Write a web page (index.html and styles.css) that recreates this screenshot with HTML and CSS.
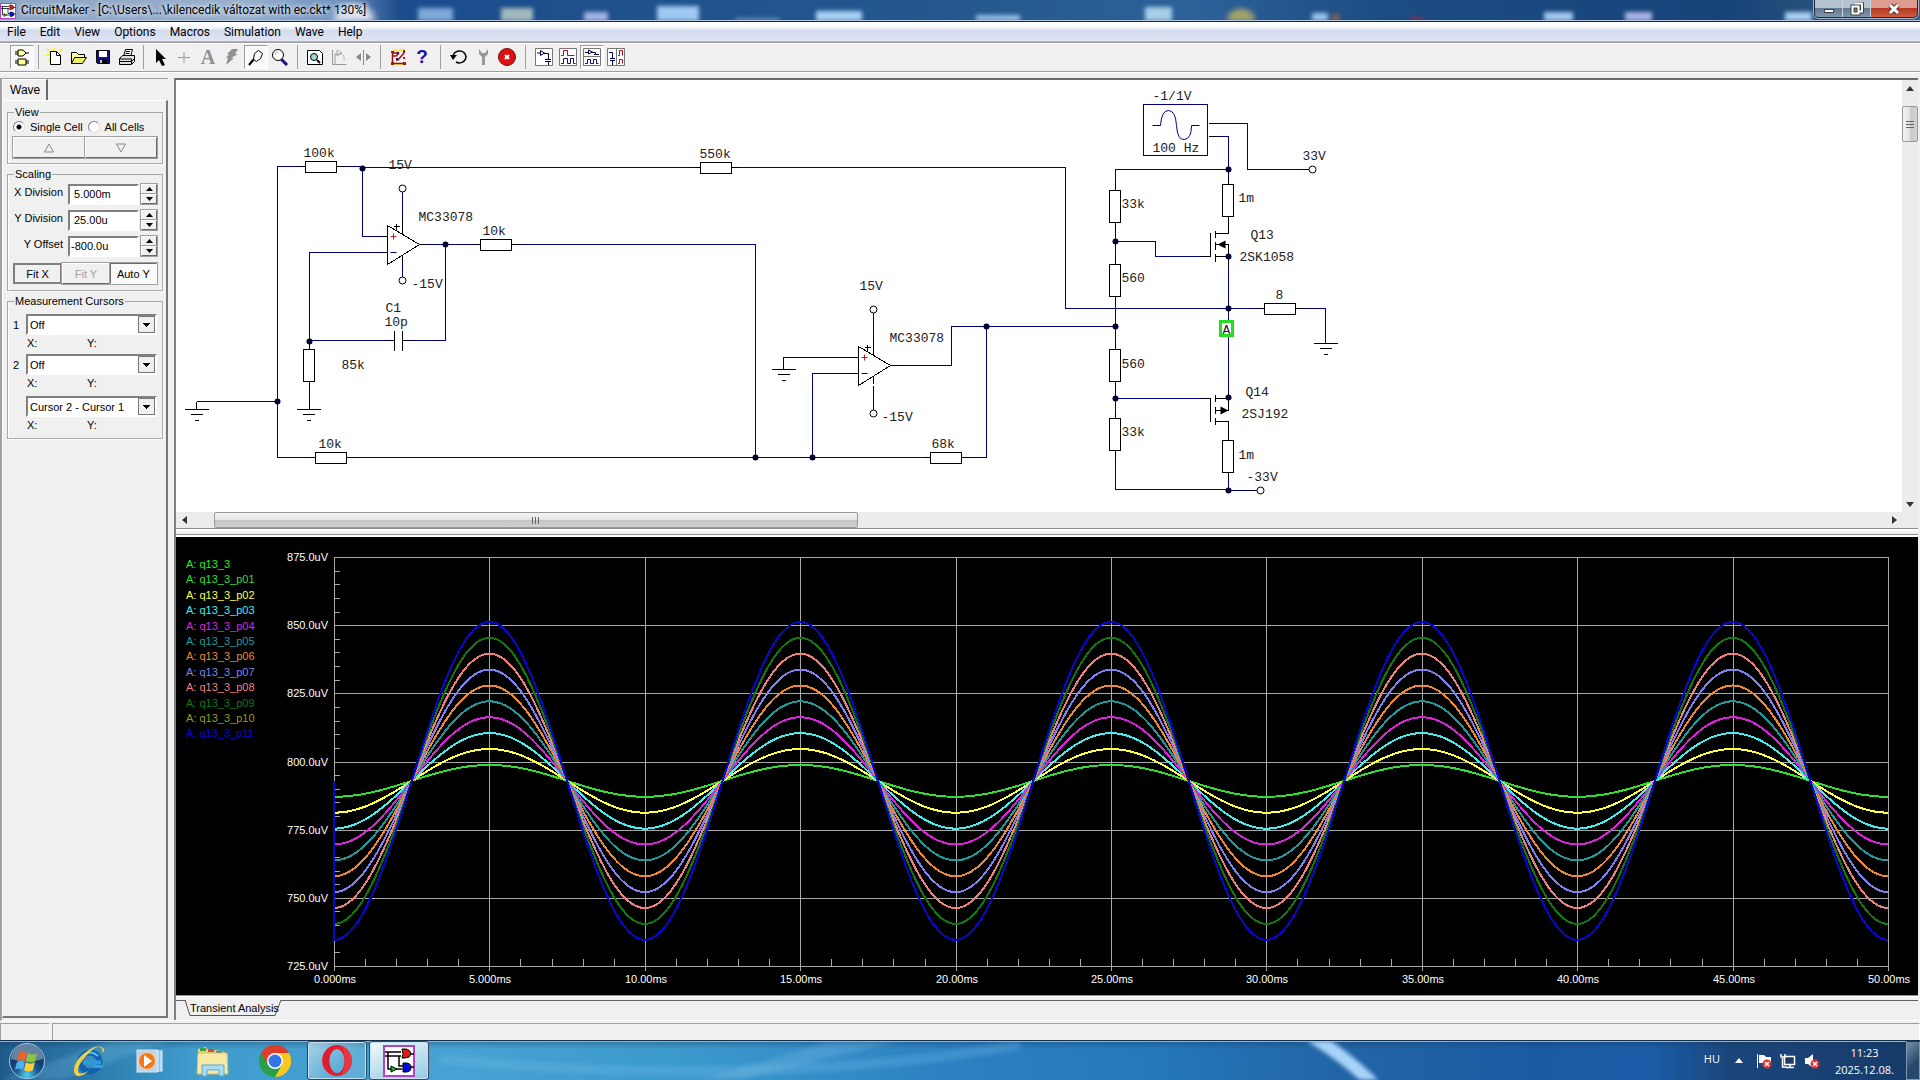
FILE: index.html
```html
<!DOCTYPE html>
<html lang="en">
<head>
  <meta charset="UTF-8" />
  <title>CircuitMaker</title>
  <link rel="stylesheet" href="styles.css">
</head>
<body>
  <header class="titlebar">
    <svg class="app-icon" width="16" height="16" viewBox="0 0 32 32"><use href="#cm-logo" /></svg>
    <span class="title-text">CircuitMaker - [C:\Users\...\kilencedik változat with ec.ckt* 130%]</span>
    <div class="window-buttons">
      <button aria-label="Minimize"><svg width="12" height="12"><rect x="1.500" y="6.500" width="9" height="3" fill="#fff" stroke="#444" /></svg></button>
      <button aria-label="Restore"><svg width="14" height="14"><path d="M5 1.500h7v8h-3M2.500 4.500h6v7h-6z" fill="none" stroke="#444" stroke-width="4" /><path d="M5 1.500h7v8h-3M2.500 4.500h6v7h-6z" fill="none" stroke="#fff" stroke-width="2" /></svg></button>
      <button class="close" aria-label="Close"><svg width="14" height="12"><path d="M3 2l8 8M11 2l-8 8" stroke="#533" stroke-width="5" /><path d="M3 2l8 8M11 2l-8 8" stroke="#fff" stroke-width="3" /></svg></button>
    </div>
  </header>

  <nav class="menubar">
    <button>File</button>
    <button>Edit</button>
    <button>View</button>
    <button>Options</button>
    <button>Macros</button>
    <button>Simulation</button>
    <button>Wave</button>
    <button>Help</button>
  </nav>

  <div class="toolbar">
    <button class="pressed" aria-label="Digital mode"><svg viewBox="0 0 20 20"><path d="M6 3h5l3 3-3 3H6zM6 12h8v6H6z" fill="#ffff99" stroke="#000" /><path d="M3 5h3M3 7h3M14 6h3M3 14h3M3 16h3M14 14h3M14 16h3" stroke="#000" /></svg></button>
    <span class="sep narrow"></span>
    <button aria-label="New"><svg viewBox="0 0 20 20"><path d="M2 2l4 4M10 1l-2 4M17 2l-3 3M1 8h4M3 14l3-3" stroke="#ffee33" stroke-width="2" /><path d="M5.500 4.500h6l4 4v9h-10z" fill="#fff" stroke="#000" /><path d="M11.500 4.500v4h4" fill="none" stroke="#000" /></svg></button>
    <button aria-label="Open"><svg viewBox="0 0 20 20"><path d="M2.500 16.500v-11h5l2 2h6v3" fill="#ffff99" stroke="#000" /><path d="M2.500 16.500l3-6h12l-4 6z" fill="#eeee66" stroke="#000" /></svg></button>
    <button aria-label="Save"><svg viewBox="0 0 20 20"><path d="M3.500 3.500h13v13h-12l-1-1z" fill="#111188" stroke="#000" /><path d="M6 4h8v6H6z" fill="#fff" /><path d="M6 12h8v4H6z" fill="#000" /><path d="M7 13h2v3H7z" fill="#ccc" /></svg></button>
    <button aria-label="Print"><svg viewBox="0 0 20 20"><path d="M6.500 9.500l2-7h7l-2 7z" fill="#fff" stroke="#000" /><path d="M9 4.500h4M8.500 6.500h4" stroke="#000" /><path d="M2.500 11.500l3-3h12v6l-3 3h-12z" fill="#ddd" stroke="#000" /><path d="M2.500 12h12v5M2.500 14.500h12l3-3" stroke="#000" fill="none" /></svg></button>
    <span class="sep narrow"></span>
    <button aria-label="Arrow"><svg viewBox="0 0 20 20"><path d="M6 2v14l3-3 3 6 3-1-3-6h4z" fill="#000" /></svg></button>
    <button aria-label="Wire"><svg viewBox="0 0 20 20"><path d="M10 5v11M4 10.500h12" stroke="#999" /></svg></button>
    <button class="letter" aria-label="Text">A</button>
    <button aria-label="Delete"><svg viewBox="0 0 20 20"><path d="M10 2h6l-3 5h3L9 11h3L4 18l2-7H4l3-4H5z" fill="#909090" /></svg></button>
    <button class="pressed" aria-label="Probe"><svg viewBox="0 0 20 20"><path d="M3 18l5-6" stroke="#000" stroke-width="2" /><path d="M7.500 12.500l1-6 4-3 4 3-2 5-4 3z" fill="#fff" stroke="#000" /></svg></button>
    <button aria-label="Zoom"><svg viewBox="0 0 20 20"><path d="M11 12l6 6" stroke="#111188" stroke-width="3" /><circle cx="8" cy="8" r="5.500" fill="#fff" stroke="#000" /><path d="M5 8q0-3 3-3" stroke="#aaa" fill="none" /></svg></button>
    <span class="sep"></span>
    <button aria-label="Fit"><svg viewBox="0 0 20 20"><path d="M2.500 3.500h12l3 3v11h-15z" fill="#fff" stroke="#000" /><circle cx="9" cy="10" r="3.500" fill="#9fd6d6" stroke="#000" /><path d="M12 13l3 3" stroke="#000" stroke-width="2" /></svg></button>
    <button aria-label="Rotate"><svg viewBox="0 0 20 20"><path d="M3.500 3v14.500h14M6 17V7h5" fill="none" stroke="#999" /><path d="M11 6q5 2 4 8M8 3l5 3-5 3z" fill="none" stroke="#999" stroke-dasharray="2 1" /></svg></button>
    <button aria-label="Mirror"><svg viewBox="0 0 20 20"><path d="M10.500 3v15" stroke="#888" /><path d="M8 6v8l-5-4zM13 6v8l5-4z" fill="#888" /></svg></button>
    <span class="sep"></span>
    <button aria-label="Check wiring"><svg viewBox="0 0 20 20"><path d="M5 2h11v3H5zM5 16h11v2H5z" fill="#ffe65a" /><path d="M4.500 4v13M4 16.500h12M5 9h3l3-3M8 13h2l6-7M5 6h5" stroke="#911" fill="none" stroke-width="1.500" /><path d="M15 3h2v3h-2zM15 10h2v2h-2zM15 15h3v3h-3zM3 15h3v3H3zM3 4h3v2H3z" fill="#a11" /><path d="M9 5h2v2H9zM8 11h2v2H8z" fill="#119" /></svg></button>
    <button class="help" aria-label="Help">?</button>
    <span class="sep wide"></span>
    <button aria-label="Reset"><svg viewBox="0 0 20 20"><path d="M4 9a6.500 6 0 1 1 3 6" fill="none" stroke="#000" stroke-width="1.500" /><path d="M1 8h7l-4 5z" fill="#000" /></svg></button>
    <button aria-label="Setup"><svg viewBox="0 0 20 20"><path d="M6 2v5l3 3v8h3v-8l3-3V2l-3 4H9z" fill="#999" /></svg></button>
    <button aria-label="Stop"><svg viewBox="0 0 20 20"><circle cx="10" cy="10" r="8.500" fill="#dd1111" stroke="#801010" /><path d="M8 8l4 4M12 8l-4 4" stroke="#fff" stroke-width="2" /></svg></button>
    <span class="sep wide"></span>
    <button aria-label="Schematic view"><svg viewBox="0 0 20 20"><path d="M1.500 1.500h17v17h-17z" fill="#fff" stroke="#777" /><path d="M3 6h3M6.500 3.500v5l4-2.500zM10 6.500h4.500v6M11 12.500h6M11 14.500h6M14.500 15v3" fill="none" stroke="#000044" /></svg></button>
    <button aria-label="Waveform view"><svg viewBox="0 0 20 20"><path d="M1.500 1.500h17v17h-17z" fill="#fff" stroke="#777" /><path d="M3 8.500h2.500V3.500h4v5h7" fill="none" stroke="#b01020" /><path d="M3 16.500h2.500v-5h4v5h3v-5h3v5h2" fill="none" stroke="#101070" /></svg></button>
    <button class="pressed" aria-label="Split horizontally"><svg viewBox="0 0 20 20"><path d="M1.500 1.500h17v17h-17zM2 9.500h16" fill="#fff" stroke="#777" /><path d="M3 5.500h3M6.500 3v4l4-2zM10 5.500h3.500v2M12 7.500h5" fill="none" stroke="#000044" /><path d="M3 16.500h2.500v-4h3v4h3v-4h3v4h2" fill="none" stroke="#101070" /></svg></button>
    <button aria-label="Split vertically"><svg viewBox="0 0 20 20"><path d="M1.500 1.500h17v17h-17zM10.500 2v16" fill="#fff" stroke="#777" /><path d="M3 5.500h3.500v6M4 11.500h5M4 13.500h5M6.500 14v4" fill="none" stroke="#000044" /><path d="M12 8.500h1.500V3.500h3v5M12 16.500h1.500v-4h3v4" fill="none" stroke="#b01020" /></svg></button>
  </div>

  <main class="workspace">
    <aside class="sidebar">
      <button class="tab">Wave</button>
      <div class="panel">
        <fieldset class="view-group">
          <legend>View</legend>
          <div class="radios">
            <label><input type="radio" name="cell" checked>Single Cell</label>
            <label><input type="radio" name="cell">All Cells</label>
          </div>
          <div class="buttons">
            <button aria-label="Previous cell"><svg width="12" height="10"><path d="M1.500 9h9L6 1z" fill="none" stroke="#888" /></svg></button>
            <button aria-label="Next cell"><svg width="12" height="10"><path d="M1.500 1h9L6 9z" fill="none" stroke="#888" /></svg></button>
          </div>
        </fieldset>

        <fieldset class="scaling-group">
          <legend>Scaling</legend>
          <div class="field">
            <label for="xdiv">X Division</label>
            <input type="text" id="xdiv" value="5.000m">
            <div class="spin">
              <button aria-label="Increase X"><svg width="7" height="4"><path d="M0 4h7L3.500 0z" /></svg></button>
              <button aria-label="Decrease X"><svg width="7" height="4"><path d="M0 0h7L3.500 4z" /></svg></button>
            </div>
          </div>
          <div class="field">
            <label for="ydiv">Y Division</label>
            <input type="text" id="ydiv" value="25.00u">
            <div class="spin">
              <button aria-label="Increase Y"><svg width="7" height="4"><path d="M0 4h7L3.500 0z" /></svg></button>
              <button aria-label="Decrease Y"><svg width="7" height="4"><path d="M0 0h7L3.500 4z" /></svg></button>
            </div>
          </div>
          <div class="field">
            <label for="yoff">Y Offset</label>
            <input type="text" id="yoff" class="tight" value="-800.0u">
            <div class="spin">
              <button aria-label="Increase offset"><svg width="7" height="4"><path d="M0 4h7L3.500 0z" /></svg></button>
              <button aria-label="Decrease offset"><svg width="7" height="4"><path d="M0 0h7L3.500 4z" /></svg></button>
            </div>
          </div>
          <div class="buttons fit">
            <button class="default">Fit X</button>
            <button disabled>Fit Y</button>
            <button class="down">Auto Y</button>
          </div>
        </fieldset>

        <fieldset class="cursor-group">
          <legend>Measurement Cursors</legend>
          <div class="cursor"><label for="c1">1</label><select id="c1"><option>Off</option></select></div>
          <div class="xy"><span>X:</span><span>Y:</span></div>
          <div class="cursor"><label for="c2">2</label><select id="c2"><option>Off</option></select></div>
          <div class="xy"><span>X:</span><span>Y:</span></div>
          <div class="cursor difference"><span></span><select id="cdiff" aria-label="Cursor difference"><option>Cursor 2 - Cursor 1</option></select></div>
          <div class="xy"><span>X:</span><span>Y:</span></div>
        </fieldset>
      </div>
    </aside>

    <section class="content">
      <div class="schematic-row">
        <div class="schematic">
          <svg width="1726" height="432" viewBox="175.500 79.500 1726 432">
            <defs>
              <g id="cm-logo">
                <rect x="1" y="1" width="30" height="30" fill="#fff" stroke="#b044c8" stroke-width="2" />
                <path d="M2 7h16M2 11h16M5 7v17h3M16 11v10h4M27 9h4M13 24h6M28 22h3" fill="none" stroke="#000" stroke-width="1.500" />
                <path d="M19 4h3q5 0 6 5q-1 4-6 4h-3q2-4 0-9z" fill="#e01818" stroke="#000" />
                <path d="M20 18h3q5 0 5 4.500t-5 4.500h-3z" fill="#0808d8" stroke="#000" />
                <path d="M8 21v6l6-3z" fill="#22b822" stroke="#000" />
              </g>
              <g id="res-h"><path class="lead" d="M-7 5H39" /><rect width="31" height="11" class="part" /></g>
              <g id="res-v"><path class="lead" d="M6-7V39" /><rect width="11" height="32" class="part" /></g>
              <g id="gnd"><path class="lead" d="M-12 0H12M-6 5H6M-2 11H2" /></g>
              <g id="opamp">
                <path class="body" d="M0 0V39L32 19z" />
                <path class="lead" d="M-7 11H0M-7 27H0M32 19H39M15-10V9M15 29V37" />
                <path class="lead" d="M6 1H12M9-2V4" />
                <path d="M3 11H9M6 8V14" stroke="#c02020" />
                <path d="M3 27H9" stroke="#000080" />
              </g>
              <circle id="dot" r="3" />
            </defs>

            <!-- wires -->
            <g class="wire">
              <path d="M300 166H277V457H318M343 166H362M362 167H702M730 167H1065V308H1258M1302 308H1325V343" />
              <path d="M362 167V236H382M387 252H309V340H394M402 340H445V244M419 244H474M518 244H755V457" />
              <path d="M196 401H277M309 340V409M340 457H924M962 457H986V326M889 365H951V326H1115" />
              <path d="M402 191V236M402 262V280M873 312V356M873 385V413" />
              <path d="M851 357H783V363M857 373H812V457" />
              <path d="M1208 123H1247V169H1302M1208 136H1228V490H1250M1228 169H1115V489H1228" />
              <path d="M1115 241H1155V256H1200M1115 398H1200" />
            </g>

            <!-- resistors -->
            <use href="#res-h" x="305" y="161" />
            <use href="#res-h" x="700" y="162" />
            <use href="#res-h" x="480" y="239" />
            <use href="#res-h" x="315" y="452" />
            <use href="#res-h" x="930" y="452" />
            <use href="#res-h" x="1264" y="303" />
            <use href="#res-v" x="303" y="349" />
            <use href="#res-v" x="1109" y="190" />
            <use href="#res-v" x="1109" y="264" />
            <use href="#res-v" x="1109" y="349" />
            <use href="#res-v" x="1109" y="418" />
            <use href="#res-v" x="1222" y="184" />
            <use href="#res-v" x="1222" y="440" />

            <!-- capacitor -->
            <rect x="395" y="332" width="7" height="16" fill="#fff" />
            <path class="lead" d="M394 330V350M402 330V350M387 340H394M402 340H410" />

            <!-- grounds -->
            <use href="#gnd" x="196" y="409" />
            <use href="#gnd" x="308" y="409" />
            <use href="#gnd" x="783" y="369" />
            <use href="#gnd" x="1325" y="343" />
            <path class="lead" d="M196 401V409M309 400V409M783 362V369" />

            <!-- op amps and supply terminals -->
            <use href="#opamp" x="387" y="225" />
            <use href="#opamp" x="858" y="346" />
            <g class="terminal">
              <circle cx="402" cy="188" r="3.500" />
              <circle cx="402" cy="280" r="3.500" />
              <circle cx="873" cy="309" r="3.500" />
              <circle cx="873" cy="413" r="3.500" />
              <circle cx="1312" cy="169" r="3.500" />
              <circle cx="1260" cy="490" r="3.500" />
            </g>
            <path class="lead" d="M1302 169H1308M1250 490H1256" />

            <!-- generator -->
            <rect x="1143" y="104" width="64" height="51" fill="#fff" stroke="#000080" />
            <path d="M1152 125H1160Q1161 110 1168 110T1176 125T1184 139T1191 125H1199" fill="none" stroke="#000080" />
            <path class="lead" d="M1208 123H1216M1208 136H1216" />

            <!-- transistors -->
            <path class="blank" d="M1228 233V244M1228 410V421" />
            <path class="lead" d="M1200 256H1210V232M1215 230V237M1215 241V249M1215 253V261M1215 233H1228V223M1215 244H1228V264M1215 256H1228" />
            <path d="M1217 244l8-4v8z" />
            <path class="lead" d="M1200 398H1210V421M1215 394V401M1215 406V413M1215 417V424M1215 398H1228M1215 410H1228V390M1215 421H1228V433" />
            <path d="M1228 410l-8-4v8z" />

            <!-- junctions -->
            <g class="junction">
              <use href="#dot" x="362" y="168" />
              <use href="#dot" x="445" y="244" />
              <use href="#dot" x="309" y="341" />
              <use href="#dot" x="277" y="401" />
              <use href="#dot" x="755" y="457" />
              <use href="#dot" x="812" y="457" />
              <use href="#dot" x="986" y="326" />
              <use href="#dot" x="1115" y="326" />
              <use href="#dot" x="1115" y="241" />
              <use href="#dot" x="1115" y="398" />
              <use href="#dot" x="1228" y="169" />
              <use href="#dot" x="1228" y="256" />
              <use href="#dot" x="1228" y="308" />
              <use href="#dot" x="1228" y="397" />
              <use href="#dot" x="1228" y="490" />
            </g>

            <!-- probe -->
            <rect x="1220" y="321" width="12" height="14" fill="#fff" stroke="#22dd22" stroke-width="3" />

            <g class="labels">
              <text x="303" y="156">100k</text>
              <text x="388" y="168">15V</text>
              <text x="418" y="220">MC33078</text>
              <text x="482" y="234">10k</text>
              <text x="699" y="157">550k</text>
              <text x="411" y="287">-15V</text>
              <text x="385" y="311">C1</text>
              <text x="384" y="325">10p</text>
              <text x="341" y="368">85k</text>
              <text x="318" y="447">10k</text>
              <text x="859" y="289">15V</text>
              <text x="889" y="341">MC33078</text>
              <text x="881" y="420">-15V</text>
              <text x="931" y="447">68k</text>
              <text x="1152" y="99">-1/1V</text>
              <text x="1152" y="151">100 Hz</text>
              <text x="1302" y="159">33V</text>
              <text x="1121" y="207">33k</text>
              <text x="1121" y="281">560</text>
              <text x="1121" y="367">560</text>
              <text x="1121" y="435">33k</text>
              <text x="1238" y="201">1m</text>
              <text x="1238" y="458">1m</text>
              <text x="1250" y="238">Q13</text>
              <text x="1239" y="260">2SK1058</text>
              <text x="1245" y="395">Q14</text>
              <text x="1241" y="417">2SJ192</text>
              <text x="1275" y="298">8</text>
              <text x="1246" y="480">-33V</text>
              <text x="1222" y="333">A</text>
            </g>
          </svg>
        </div>
        <div class="scroll vertical">
          <button aria-label="Scroll up"><svg width="8" height="5"><path d="M4 0l4 5H0z" /></svg></button>
          <div class="thumb"></div>
          <button aria-label="Scroll down"><svg width="8" height="5"><path d="M0 0h8L4 5z" /></svg></button>
        </div>
      </div>
      <div class="scroll horizontal">
        <button aria-label="Scroll left"><svg width="5" height="8"><path d="M5 0v8L0 4z" /></svg></button>
        <div class="thumb"></div>
        <button aria-label="Scroll right"><svg width="5" height="8"><path d="M0 0v8l5-4z" /></svg></button>
      </div>
      <div class="splitter"></div>
      <div class="chart" id="chart"></div>
      <div class="sheet-tabs">
        <button class="sheet">
          <svg width="98" height="17"><path d="M0 0H1L6 15.500H91L97 0" fill="#f0f0f0" stroke="#555" /></svg>
          <span>Transient Analysis</span>
        </button>
      </div>
    </section>
  </main>

  <footer class="status"><span></span><span></span></footer>

  <nav class="taskbar">
    <svg class="streaks" preserveAspectRatio="none" viewBox="0 0 1920 39">
      <path d="M0 39L110 0h60L60 39z" fill="#7cc2e6" opacity=".25" />
      <path d="M700 39L830 0h70L740 39z" fill="#9fd4f4" opacity=".2" />
      <path d="M440 18Q760 48 1020 4" fill="none" stroke="#7cc4ee" stroke-width="10" opacity=".25" />
      <path d="M1306 -8Q1348 16 1380 50" fill="none" stroke="#a9d4fa" stroke-width="13" />
    </svg>
    <button class="start" aria-label="Start">
      <svg width="38" height="38" viewBox="0 0 38 38">
        <defs><radialGradient id="orb" cy=".9"><stop offset="0" stop-color="#4fd0f0" /><stop offset=".6" stop-color="#1c5f96" /><stop offset="1" stop-color="#123f70" /></radialGradient></defs>
        <circle cx="19" cy="19" r="17.500" fill="url(#orb)" stroke="#a8c8dc" />
        <path d="M3 17a16 15 0 0 1 32 0q-16 5-32 0z" fill="#fff" opacity=".35" />
        <path d="M11 11q4-3 8 0l-2 8q-4-3-8 0z" fill="#f0602a" />
        <path d="M20 11q5 3 9 0l-2 8q-4 3-9 0z" fill="#8cc63c" />
        <path d="M9 20q4-3 8 0l-2 8q-4-3-8 0z" fill="#4cb0ea" />
        <path d="M18 20q4 3 9 0l-2 8q-4 3-9 0z" fill="#fccc3a" />
      </svg>
    </button>
    <button class="task" aria-label="Internet Explorer">
      <svg width="32" height="32" viewBox="0 0 32 32">
        <circle cx="17" cy="17" r="9.500" fill="none" stroke="#0e62ae" stroke-width="6" />
        <path d="M20 20h10v3H20z" fill="#3f9ccc" />
        <path d="M28 17.500H10" stroke="#2c9ce0" stroke-width="4" />
        <path d="M9 11q8-7 16 0" fill="none" stroke="#58c0f0" stroke-width="2" />
        <path d="M31 4Q25-2 13 7T1 25Q1 32 7 31Q13 29 15 26Q6 31 5 26T14 10T28 3Q30 4 29 8Q32 6 31 4z" fill="#f0cf40" />
      </svg>
    </button>
    <button class="task" aria-label="Media Player">
      <svg width="32" height="32" viewBox="0 0 32 32">
        <rect x="12" y="5" width="16" height="22" fill="#8fc4e6" /><path d="M23 5v22M26 6v20" stroke="#e8f4fc" />
        <rect x="2" y="5" width="20" height="22" fill="#b8d4e6" stroke="#d8e8f2" />
        <circle cx="12" cy="16" r="8.500" fill="#f27a1c" stroke="#fcd8b4" /><path d="M9 10v12l8-6z" fill="#fff" />
      </svg>
    </button>
    <button class="task" aria-label="Explorer">
      <svg width="34" height="32" viewBox="0 0 34 32">
        <path d="M2 4l8-2 2 3h6l8 1 6 3-1 20H1z" fill="#e8cf78" />
        <path d="M4 3h6v3H4z" fill="#38a048" /><path d="M12 4h6v3h-6z" fill="#d05030" /><path d="M20 6h6v3h-6z" fill="#3880d0" />
        <path d="M2 8h29l1 21H1z" fill="#f8e9a4" stroke="#d8bc60" />
        <path d="M6 31V20h22v11h-5v-6H11v6z" fill="#a8dcf4" stroke="#5aa8d0" />
      </svg>
    </button>
    <button class="task" aria-label="Chrome">
      <svg width="32" height="32" viewBox="0 0 32 32">
        <circle cx="16" cy="16" r="16" fill="#28a048" />
        <path d="M16 16L2.100 8A16 16 0 0 1 29.900 8z" fill="#e03c2c" />
        <path d="M16 8h13.900A16 16 0 0 1 16 32l7-12z" fill="#fcc820" />
        <path d="M2.100 8l7 12 7-12z" fill="#e03c2c" />
        <circle cx="16" cy="16" r="8" fill="#fff" /><circle cx="16" cy="16" r="6.500" fill="#3574e8" />
      </svg>
    </button>
    <button class="task open" aria-label="Opera">
      <svg width="32" height="32" viewBox="0 0 32 32">
        <path fill-rule="evenodd" d="M16 0a15 15.500 0 1 0 .1 0zM16 4a7.500 12 0 1 1-.1 0z" fill="#e01c30" />
        <path d="M20 1a15 15 0 0 1 0 29q8-14 0-29z" fill="#f05050" opacity=".5" />
      </svg>
    </button>
    <button class="task open active" aria-label="CircuitMaker">
      <svg width="32" height="32" viewBox="0 0 32 32"><use href="#cm-logo" /></svg>
    </button>
    <div class="tray">
      <span class="lang">HU</span>
      <button class="more" aria-label="Show hidden icons"><svg width="8" height="5"><path d="M4 0l4 5H0z" fill="#fff" /></svg></button>
      <button aria-label="Action Center"><svg width="16" height="16"><path d="M1.500 1v14" stroke="#fff" /><path d="M3 2h5l2 2h5v6H3z" fill="#fff" /><circle cx="11" cy="11" r="4.500" fill="#dd3333" /><path d="M9 9l4 4M13 9l-4 4" stroke="#fff" stroke-width="1.500" /></svg></button>
      <button aria-label="Network"><svg width="16" height="16"><path d="M4.500 3.500h10v8h-10z" fill="#1a3c66" stroke="#fff" stroke-width="1.500" /><path d="M6 14.500h8M10 12v2M2.500 5v9h4M1 1v3h4V1" fill="none" stroke="#fff" stroke-width="1.500" /></svg></button>
      <button aria-label="Volume"><svg width="16" height="16"><path d="M1 5h3l5-4v14l-5-4H1z" fill="#fff" /><circle cx="11" cy="11" r="4.500" fill="#dd3333" /><path d="M9 9l4 4M13 9l-4 4" stroke="#fff" stroke-width="1.500" /></svg></button>
      <div class="clock"><span>11:23</span><span>2025.12.08.</span></div>
      <button class="show-desktop" aria-label="Show desktop"></button>
    </div>
  </nav>

  <script src="chart.js"></script>
</body>
</html>
```
FILE: styles.css
```css
* {
  box-sizing: border-box;
}

body {
  margin: 0;
  height: 100vh;
  display: flex;
  flex-direction: column;
  overflow: hidden;
  background: #f0f0f0;
  color: #000;
  font-family: "Liberation Sans", Arial, sans-serif;
  font-size: 11px;
}

button, input, select {
  font: inherit;
  color: inherit;
  margin: 0;
  padding: 0;
  border-radius: 0;
}

button {
  background: none;
  border: none;
}

svg {
  display: block;
}

/* Title bar */
.titlebar {
  position: relative;
  height: 22px;
  flex: none;
  display: flex;
  align-items: flex-start;
  overflow: hidden;
  border-bottom: 1px solid #10284a;
  background: linear-gradient(90deg, #8ca4c4 0, #98b0cc 240px, #6f92c0 340px, #1c4c8c 400px, #24588f 50%, #2c6299 62%, #1c4c84 72%, #174378 90%, #3f607f);
}

/* desktop icons showing through the glass */
.titlebar::before {
  content: "";
  position: absolute;
  inset: 0;
  filter: blur(2px);
  background:
    linear-gradient(#7fa8d8, #7fa8d8) 418px 8px / 35px 14px no-repeat,
    linear-gradient(#a3b8bb, #a3b8bb) 501px 8px / 32px 14px no-repeat,
    linear-gradient(#a3b4e2, #a3b4e2) 584px 12px / 24px 10px no-repeat,
    linear-gradient(#9fc8f2, #9fc8f2) 657px 6px / 42px 16px no-repeat,
    linear-gradient(#9fc0e4, #9fc0e4) 735px 19px / 45px 3px no-repeat,
    linear-gradient(#a8d0f4, #a8d0f4) 816px 11px / 46px 11px no-repeat,
    linear-gradient(#98c0e6, #98c0e6) 976px 15px / 44px 7px no-repeat,
    linear-gradient(#a8cde8, #a8cde8) 1145px 7px / 27px 15px no-repeat,
    radial-gradient(17px 14px at 1241px 20px, #a6a468 60%, transparent),
    linear-gradient(#9cc4ec, #9cc4ec) 1312px 13px / 16px 9px no-repeat,
    linear-gradient(#80604c, #80604c) 1332px 14px / 8px 8px no-repeat,
    linear-gradient(#80304a, #80304a) 1411px 17px / 12px 5px no-repeat,
    linear-gradient(#a4c8ee, #a4c8ee) 1544px 12px / 29px 10px no-repeat,
    linear-gradient(#a8b4e4, #a8b4e4) 1625px 12px / 27px 10px no-repeat,
    linear-gradient(#a8d0f4, #a8d0f4) 1785px 12px / 27px 10px no-repeat,
    radial-gradient(25px 20px at 354px 20px, #d6dcec 60%, transparent);
}

.titlebar::after {
  content: "";
  position: absolute;
  left: 0;
  right: 0;
  bottom: 0;
  height: 1px;
  background: #b4c8e0;
}

.titlebar > * {
  position: relative;
}

.app-icon {
  margin-top: 3px;
}

.title-text {
  margin-left: 5px;
  font-family: Roboto, "Noto Sans", sans-serif;
  font-size: 12px;
  line-height: 21px;
  text-shadow: 0 0 6px #fff, 0 0 4px #dde8f4;
  flex: 1;
  white-space: nowrap;
}

.window-buttons {
  display: flex;
  margin-right: 2px;
  height: 18px;
  border: 1px solid #1c2c40;
  border-top: none;
  border-radius: 0 0 5px 5px;
  overflow: hidden;
  box-shadow: 0 0 0 1px #9fb4cc;
}

.window-buttons button {
  width: 28px;
  display: flex;
  align-items: center;
  justify-content: center;
  background: linear-gradient(#b4c2d0 0 45%, #64788e 50%, #8098b0);
  border-right: 1px solid #c8d4e0;
}

.window-buttons .close {
  width: 46px;
  border-right: none;
  background: linear-gradient(#dc9c90 0 45%, #b83a24 50%, #cc5c40);
}

/* Menu bar */
.menubar {
  flex: none;
  height: 20px;
  display: flex;
  background: linear-gradient(#ffffff 0 3px, #e8edf7 7px, #d4dbee 8px, #e0e5f4);
  border-bottom: 1px solid #b0b4c0;
  font-family: Roboto, "Noto Sans", sans-serif;
  font-size: 12px;
}

.menubar button {
  padding: 0 7px;
  line-height: 18px;
}

/* Toolbar */
.toolbar {
  flex: none;
  height: 30px;
  display: flex;
  align-items: center;
  padding-left: 10px;
  border-top: 1px solid #a0a0a0;
  border-bottom: 1px solid #a0a0a0;
  box-shadow: inset 0 1px #fff, 0 1px #fff;
}

.toolbar button {
  width: 24px;
  height: 24px;
  padding: 2px;
}

.toolbar button.pressed {
  background: #f9f9f9;
  border: 1px solid #a0a0a0;
  border-right-color: #fff;
  border-bottom-color: #fff;
  padding: 1px;
}

.toolbar .letter {
  font: bold 20px/20px "Liberation Serif", serif;
  color: #909090;
}

.toolbar .help {
  font: bold 19px/20px "Liberation Sans", sans-serif;
  color: #1414a0;
}

.sep {
  width: 1px;
  height: 24px;
  margin: 0 5px;
  background: #a0a0a0;
}

.sep.narrow {
  margin: 0 4px;
}

.sep.wide {
  margin: 0 6px;
}

/* Workspace */
.workspace {
  flex: 1;
  min-height: 0;
  display: flex;
  gap: 6px;
  margin-top: 6px;
  padding-right: 2px;
  border-left: 2px solid #a0a0a0;
  border-bottom: 1px solid #fff;
}

.sidebar {
  width: 166px;
  flex: none;
  display: flex;
  flex-direction: column;
  border-top: 1px solid #a0a0a0;
  padding-bottom: 2px;
}

.tab {
  width: 46px;
  height: 21px;
  border-right: 2px solid #696969;
  border-top: 1px solid #fff;
  border-left: 1px solid #fff;
  text-align: left;
  padding-left: 7px;
  font-size: 12px;
  white-space: nowrap;
}

.panel {
  flex: 1;
  border: 1px solid #fff;
  border-right: 2px solid #777;
  border-bottom: 2px solid #777;
  padding: 5px 3px 0 4px;
}

fieldset {
  margin: 0 0 4px;
  padding: 0 5px;
  border: 1px solid #a8a8a8;
  box-shadow: 1px 1px #fff, inset 1px 0 #fff;
  min-width: 0;
}

legend {
  padding: 0 1px;
  margin-left: 1px;
  line-height: 13px;
}

.view-group {
  height: 58px;
}

.scaling-group {
  height: 123px;
}

.cursor-group {
  height: 144px;
}

.radios {
  display: flex;
  gap: 5px;
  height: 16px;
  margin-bottom: 2px;
  white-space: nowrap;
}

.radios label {
  display: flex;
  align-items: center;
  gap: 5px;
}

.radios input {
  appearance: none;
  width: 12px;
  height: 12px;
  border-radius: 50%;
  border: 1px solid #808080;
  border-right-color: #e0e0e0;
  border-bottom-color: #e0e0e0;
  background: #fff;
}

.radios input:checked {
  background: radial-gradient(#000 2px, #fff 3px);
}

.buttons {
  display: flex;
}

.buttons button {
  flex: 1;
  height: 21px;
  display: flex;
  align-items: center;
  justify-content: center;
  border: 1px solid #fff;
  border-right-color: #696969;
  border-bottom-color: #696969;
  box-shadow: 0 0 0 1px #a0a0a0;
}

.buttons .default {
  border: 2px solid #808080;
  box-shadow: none;
}

.buttons button:disabled {
  color: #a0a0a0;
}

.buttons .down {
  background: #fafafa;
  border-color: #696969 #fff #fff #696969;
}

.fit {
  margin-top: 4px;
}

.field {
  display: flex;
  height: 26px;
  align-items: center;
}

.field label {
  width: 50px;
  margin-right: 5px;
  text-align: right;
  white-space: nowrap;
  padding-bottom: 4px;
}

.field input {
  width: 71px;
  height: 21px;
  border: 2px solid #fff;
  border-top-color: #808080;
  border-left-color: #808080;
  padding-left: 4px;
  background: #fff;
}

.field .tight {
  padding-left: 1px;
}

.spin {
  display: flex;
  flex-direction: column;
  width: 16px;
  margin-left: 2px;
}

.spin button {
  height: 10px;
  display: flex;
  align-items: center;
  justify-content: center;
  border: 1px solid #fff;
  border-right-color: #696969;
  border-bottom-color: #696969;
  outline: 1px solid #a0a0a0;
}

.cursor {
  display: flex;
  align-items: center;
  height: 21px;
}

legend + .cursor {
  margin-top: 6px;
}

.cursor.difference {
  margin-top: 2px;
}

.cursor label, .cursor > span {
  width: 13px;
}

.cursor select {
  appearance: none;
  flex: 1;
  height: 21px;
  border: 2px solid #fff;
  border-top-color: #808080;
  border-left-color: #808080;
  padding-left: 2px;
  background:
    linear-gradient(#000, #000) right 5px top 7px / 7px 1px no-repeat,
    linear-gradient(#000, #000) right 6px top 8px / 5px 1px no-repeat,
    linear-gradient(#000, #000) right 7px top 9px / 3px 1px no-repeat,
    linear-gradient(#000, #000) right 8px top 10px / 1px 1px no-repeat,
    linear-gradient(#f0f0f0, #f0f0f0) right 1px top 1px / 15px 15px no-repeat,
    linear-gradient(#777, #777) right 0 top 0 / 17px 17px no-repeat,
    #fff;
}

.xy {
  display: flex;
  height: 19px;
  line-height: 16px;
  padding-left: 14px;
}

.xy span {
  width: 60px;
}

/* Right side */
.content {
  flex: 1;
  min-width: 0;
  display: flex;
  flex-direction: column;
  border-left: 2px solid #808080;
  border-top: 2px solid #696969;
}

.schematic-row {
  display: flex;
  background: #fff;
}

.schematic {
  flex: 1;
  min-width: 0;
  overflow: hidden;
}

.lead, .body, .part, .wire path {
  shape-rendering: crispEdges;
}

.lead {
  stroke: #000;
  fill: none;
}

.body, .part, .terminal circle {
  stroke: #000;
  fill: #fff;
}

.wire path {
  stroke: #000080;
  fill: none;
}

.blank {
  stroke: #fff;
  stroke-width: 3px;
}

.junction {
  fill: #000033;
}

.labels text {
  font-family: "Liberation Mono", "Courier New", monospace;
  font-size: 13px;
  fill: #222;
}

.scroll {
  display: flex;
  background: #ececec;
}

.scroll button {
  display: flex;
  align-items: center;
  justify-content: center;
  width: 16px;
  height: 16px;
}

.scroll svg {
  fill: #333;
}

.scroll.vertical {
  width: 16px;
  flex-direction: column;
}

.vertical button:last-child {
  margin-top: auto;
}

.vertical .thumb {
  height: 36px;
  margin-top: 10px;
  border: 1px solid #989898;
  border-radius: 2px;
  background:
    repeating-linear-gradient(#666 0 1px, transparent 1px 3px) center / 8px 7px no-repeat,
    linear-gradient(90deg, #f4f4f4, #e0e0e0 50%, #c8c8c8 50%, #d4d4d4);
}

.scroll.horizontal {
  flex: none;
  height: 16px;
  padding-right: 16px;
}

.horizontal button:last-child {
  margin-left: auto;
}

.horizontal .thumb {
  width: 37.300%;
  margin-left: 22px;
  border: 1px solid #989898;
  border-radius: 2px;
  background:
    repeating-linear-gradient(90deg, #666 0 1px, transparent 1px 3px) center / 8px 7px no-repeat,
    linear-gradient(#f4f4f4, #e4e4e4 50%, #c4c4c8 50%, #d0d0d0);
}

.splitter {
  flex: none;
  height: 9px;
  border-top: 1px solid #909090;
  box-shadow: inset 0 2px #fff, inset 0 -2px #fff, inset 0 -3px #909090;
}

.chart {
  flex: 1;
  min-height: 0;
  background: #000;
  overflow: hidden;
}

.chart text {
  font-size: 11px;
  fill: #fff;
}

.chart .grid {
  stroke: #a8a8a8;
  fill: none;
  shape-rendering: crispEdges;
}

.chart .trace {
  fill: none;
  stroke-width: 2px;
  shape-rendering: crispEdges;
}

.sheet-tabs {
  flex: none;
  height: 25px;
  padding: 5px 0 0 8px;
  background: linear-gradient(#909090 0 1px, #fff 1px 2px, #f0f0f0 2px 5px, #606060 5px 6px, #f0f0f0 6px);
}

.sheet {
  position: relative;
  width: 98px;
  height: 17px;
}

.sheet span {
  position: absolute;
  left: 6px;
  top: 2px;
  white-space: nowrap;
}

/* Status bar */
.status {
  flex: none;
  display: flex;
  gap: 2px;
  height: 19px;
  padding-top: 2px;
}

.status span {
  border-top: 1px solid #a0a0a0;
  border-left: 1px solid #a0a0a0;
  border-right: 1px solid #fff;
  width: 50px;
}

.status span:last-child {
  flex: 1;
}

/* Taskbar */
.taskbar {
  flex: none;
  position: relative;
  height: 40px;
  display: flex;
  align-items: stretch;
  overflow: hidden;
  border-top: 1px solid #14304c;
  box-shadow: inset 0 1px #8cb4d0;
  background:
    linear-gradient(rgba(20, 50, 80, .35), transparent 8px),
    linear-gradient(90deg, #205a8c 0, #2d7cae 5%, #3f9ccc 10%, #46a2d2 24%, #3b99cc 36%, #2b80c2 50%, #2478bc 60%, #2264a6 70%, #1a5ba4 80%, #1a5da8 86%, #1b467c 90%, #163a68);
}

.streaks {
  position: absolute;
  inset: 0;
  width: 100%;
  height: 100%;
  filter: blur(2px);
}

.taskbar button {
  position: relative;
  display: flex;
  align-items: center;
  justify-content: center;
}

.start {
  width: 54px;
}

.start svg {
  margin-top: 1px;
}

.task {
  width: 60px;
  margin-right: 2px;
  border-radius: 3px;
}

.start + .task {
  margin-left: 5px;
}

.task.open {
  border: 1px solid #1c4a6c;
  box-shadow: inset 0 0 0 1px #c4e4f4;
  background: linear-gradient(135deg, rgba(255, 255, 255, .55), rgba(255, 255, 255, .15) 60%);
}

.task.active {
  border-color: #446;
  background: linear-gradient(160deg, #f4fafd, #b8dcec 60%, #94c8e4);
}

.tray {
  position: relative;
  margin-left: auto;
  display: flex;
  align-items: center;
  gap: 8px;
  color: #fff;
  font-family: "Open Sans", "Noto Sans", sans-serif;
  font-size: 11px;
}

.lang {
  margin-right: 7px;
  padding-bottom: 5px;
}

.tray .more {
  margin-right: 5px;
}

.clock {
  display: flex;
  flex-direction: column;
  align-items: center;
  line-height: 17px;
  margin: 0 4px 0 7px;
}

.taskbar .show-desktop {
  align-self: stretch;
  width: 14px;
  border: 1px solid #7c98b4;
  border-top-color: #1c3450;
  background: linear-gradient(135deg, #7890a8, #284868 60%);
}
```
FILE: chart.js
```js
const chart = document.getElementById("chart");

const traces = [
  ["q13_3", "#22ee22"],
  ["q13_3_p01", "#33dd33"],
  ["q13_3_p02", "#ffff44"],
  ["q13_3_p03", "#44eeee"],
  ["q13_3_p04", "#dd22dd"],
  ["q13_3_p05", "#229999"],
  ["q13_3_p06", "#ee8833"],
  ["q13_3_p07", "#8080ee"],
  ["q13_3_p08", "#ee8080"],
  ["q13_3_p09", "#117711"],
  ["q13_3_p10", "#999922"],
  ["q13_3_p11", "#0808cc"]
];

// visible waves: one amplitude step (uV) per colour
const waves = ["#33dd33", "#ffff44", "#44eeee", "#dd22dd", "#229999", "#ee8833", "#8080ee", "#ee8080", "#117711", "#0808cc"];
const STEP = 5.83;
const CENTER = 792.9;

function draw() {
  const w = chart.clientWidth;
  const h = chart.clientHeight;
  const left = 158, top = 20, right = w - 30, bottom = h - 29;
  const dx = (right - left) / 10;
  const dy = (bottom - top) / 6;
  const px = (ms) => left + ms / 5 * dx;
  const py = (uv) => top + (875 - uv) / 25 * dy;
  let grid = "";
  let out = "";

  for (let i = 0; i <= 10; i++) {
    const x = Math.round(left + i * dx);
    grid += `M${x} ${top}V${bottom + 5}`;
    const label = i < 2 ? (i * 5).toFixed(3) : (i * 5).toFixed(2);
    out += `<text x="${x + 1}" y="${bottom + 17}" text-anchor="middle">${label}ms</text>`;
    for (let j = 1; j < 5 && i < 10; j++) {
      grid += `M${Math.round(left + (i + j / 5) * dx)} ${bottom}v-7`;
    }
  }
  for (let i = 0; i <= 6; i++) {
    const y = Math.round(top + i * dy);
    grid += `M${left} ${y}H${right}`;
    out += `<text x="152" y="${y + 4}" text-anchor="end">${875 - i * 25}.0uV</text>`;
    for (let j = 1; j < 5 && i < 6; j++) {
      grid += `M${left} ${Math.round(top + (i + j / 5) * dy)}h6`;
    }
  }
  out += `<path class="grid" d="${grid}"/>`;

  waves.forEach((color, k) => {
    const amp = STEP * (k + 1);
    let d = `M${left} ${py(CENTER)}`;
    for (let i = 0; i <= 500; i++) {
      const ms = i / 10;
      const uv = CENTER - amp * Math.cos(2 * Math.PI * ms / 10);
      d += `L${px(ms).toFixed(1)} ${py(uv).toFixed(1)}`;
    }
    out += `<path class="trace" d="${d}" stroke="${color}"/>`;
  });

  traces.forEach(([name, color], i) => {
    out += `<text x="10" y="${Math.round(31 + i * 15.4)}" style="fill:${color}">A: ${name}</text>`;
  });

  chart.innerHTML = `<svg width="${w}" height="${h}">${out}</svg>`;
}

draw();
window.addEventListener("resize", draw);
```
